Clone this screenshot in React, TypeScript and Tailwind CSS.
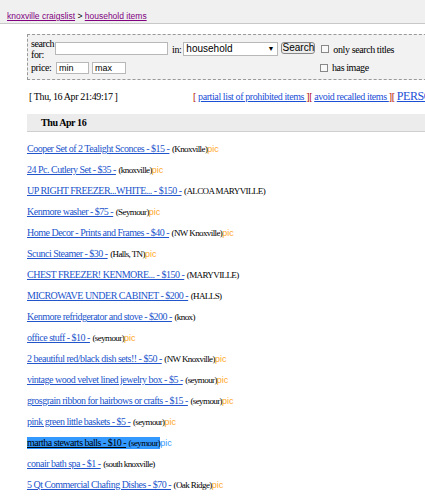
import React from "react";

const items: { t: string; loc: string; pic: boolean; sel?: boolean }[] = [
  { t: "Cooper Set of 2 Tealight Sconces - $15 -", loc: "(Knoxville)", pic: true },
  { t: "24 Pc. Cutlery Set - $35 -", loc: "(knoxville)", pic: true },
  { t: "UP RIGHT FREEZER...WHITE... - $150 -", loc: "(ALCOA MARYVILLE)", pic: false },
  { t: "Kenmore washer - $75 -", loc: "(Seymour)", pic: true },
  { t: "Home Decor - Prints and Frames - $40 -", loc: "(NW Knoxville)", pic: true },
  { t: "Scunci Steamer - $30 -", loc: "(Halls, TN)", pic: true },
  { t: "CHEST FREEZER! KENMORE... - $150 -", loc: "(MARYVILLE)", pic: false },
  { t: "MICROWAVE UNDER CABINET - $200 -", loc: "(HALLS)", pic: false },
  { t: "Kenmore refridgerator and stove - $200 -", loc: "(knox)", pic: false },
  { t: "office stuff - $10 -", loc: "(seymour)", pic: true },
  { t: "2 beautiful red/black dish sets!! - $50 -", loc: "(NW Knoxville)", pic: true },
  { t: "vintage wood velvet lined jewelry box - $5 -", loc: "(seymour)", pic: true },
  { t: "grosgrain ribbon for hairbows or crafts - $15 -", loc: "(seymour)", pic: true },
  { t: "pink green little baskets - $5 -", loc: "(seymour)", pic: true },
  { t: "martha stewarts balls - $10 -", loc: "(seymour)", pic: true, sel: true },
  { t: "conair bath spa - $1 -", loc: "(south knoxville)", pic: false },
  { t: "5 Qt Commercial Chafing Dishes - $70 -", loc: "(Oak Ridge)", pic: true },
];

const serif = { fontFamily: '"Liberation Serif", "Times New Roman", serif' };

export default function App() {
  return (
    <div className="w-[425px] h-[502px] overflow-hidden bg-white" style={serif}>
      <div className="h-[24px] bg-[#f0f0f0] border-b border-[#c8c8c8] pl-[7px] pt-[11px] text-[8.5px] leading-[11px] font-['Liberation_Sans',sans-serif] text-black whitespace-nowrap">
        <a className="underline text-[#800080]">knoxville craigslist</a> &gt;{" "}
        <a className="underline text-[#800080]">household items</a>
      </div>
      <div className="ml-[27px] mt-[10px] h-[46px] w-[420px] border border-dashed border-[#999] bg-[#f2f2f2] text-[10px] leading-[10px] text-black tracking-[-0.4px] whitespace-nowrap">
        <div className="flex items-start pt-[3px] pl-[3px]">
          <div className="w-[24px] shrink-0 leading-[11px] whitespace-normal">search for:</div>
          <div className="shrink-0 mt-[4px] w-[113px] h-[13px] bg-white border border-[#b8b8b8]" />
          <div className="ml-[4px] mt-[7px]">in:</div>
          <div className="shrink-0 ml-[2px] mt-[4px] w-[95px] h-[14px] bg-white border border-[#b8b8b8] flex items-center justify-between pl-[2px] pr-[3px] font-['Liberation_Sans',sans-serif] text-[10px] tracking-normal">
            <span>household</span>
            <span className="text-[7px]">▼</span>
          </div>
          <div className="shrink-0 ml-[3px] mt-[4px] w-[34px] h-[12px] bg-[#ececec] border border-[#888] rounded-[3px] flex items-center justify-center font-['Liberation_Sans',sans-serif] text-[10px] tracking-normal">Search</div>
          <div className="shrink-0 ml-[6px] mt-[7px] w-[8px] h-[8px] border border-[#888] bg-[#f8f8f8]" />
          <div className="ml-[4px] mt-[7px]">only search titles</div>
        </div>
        <div className="flex items-center pl-[3px] mt-[2px]">
          <div className="w-[25px] shrink-0">price:</div>
          <div className="shrink-0 w-[33px] h-[12px] bg-white border border-[#b8b8b8] pl-[2px] font-['Liberation_Sans',sans-serif] text-[9px] leading-[10px] tracking-normal">min</div>
          <div className="shrink-0 ml-[3px] w-[34px] h-[12px] bg-white border border-[#b8b8b8] pl-[2px] font-['Liberation_Sans',sans-serif] text-[9px] leading-[10px] tracking-normal">max</div>
          <div className="shrink-0 ml-[194px] w-[8px] h-[8px] border border-[#888] bg-[#f8f8f8]" />
          <div className="ml-[4px]">has image</div>
        </div>
      </div>
      <div className="mt-[10px] pl-[29px] h-[12px] text-[10px] leading-[12px] whitespace-nowrap tracking-[-0.4px]">
        <span className="inline-block w-[164px]">[ Thu, 16 Apr 21:49:17 ]</span>
        <span className="text-[#b00000]">[&nbsp;</span>
        <a className="underline text-[#1a4fd6]">partial list of prohibited items&nbsp;</a>
        <span className="text-[#b00000]">][&nbsp;</span>
        <a className="underline text-[#1a4fd6]">avoid recalled items&nbsp;</a>
        <span className="text-[#b00000]">][&nbsp;</span>
        <a className="underline text-[#1a4fd6] text-[12px]">PERSONAL SAFETY TIPS</a>
      </div>
      <div className="ml-[27px] mt-[12px] h-[18px] bg-[#ececec] border-b border-[#cfcfcf] pl-[14px] flex items-center text-[10px] font-bold tracking-[-0.4px]">
        Thu Apr 16
      </div>
      <div className="pl-[27px] pt-[11px]">
        {items.map((it, i) => (
          <div key={i} className="h-[21px] flex items-start text-[10px] leading-[12px] whitespace-nowrap">
            <span className={it.sel ? "bg-[#3399ff] text-black" : ""}>
              <a className={"tracking-[-0.5px] underline " + (it.sel ? "text-black" : "text-[#2255cc]")}>{it.t}</a>{" "}
              <span className="text-[9px] tracking-[-0.6px]">{it.loc}</span>
            </span>
            {it.pic && (
              <span className={"text-[9px] font-['Liberation_Sans',sans-serif] " + (it.sel ? "text-[#3399ff]" : "text-[#ffa726]")}>pic</span>
            )}
          </div>
        ))}
      </div>
    </div>
  );
}
